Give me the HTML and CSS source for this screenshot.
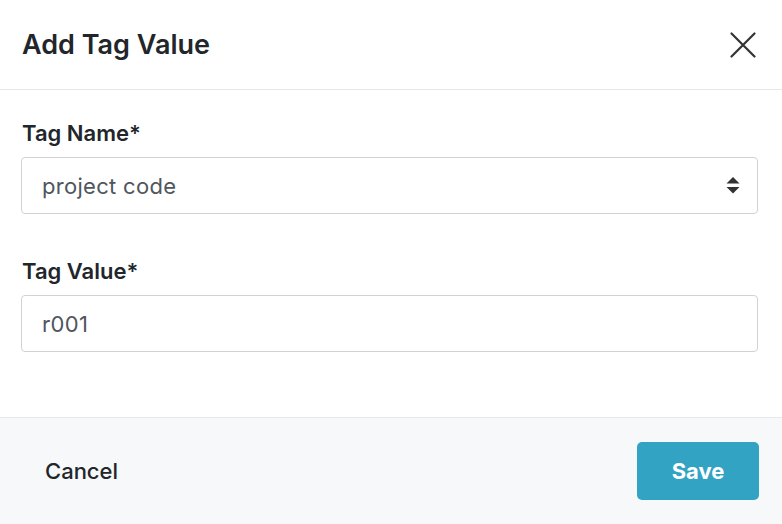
FILE: index.html
```html
<!DOCTYPE html>
<html lang="en">
<head>
    <meta charset="UTF-8">
    <meta name="viewport" content="width=device-width, initial-scale=1.0">
    <title>Add Tag Value</title>
    <link rel="stylesheet" href="styles.css">
</head>
<body>
    <div class="modal">
        <!-- header -->
        <div class="modal-header">
            <h1 class="modal-title">Add Tag Value</h1>
            <button class="close-button" aria-label="Close">
                <svg width="26" height="26" viewBox="0 0 26 26">
                    <path d="M1.5 1.5 L24.5 24.5 M24.5 1.5 L1.5 24.5" stroke="#333" stroke-width="2.2" stroke-linecap="round" fill="none"/>
                </svg>
            </button>
        </div>

        <!-- form -->
        <div class="modal-body">
            <div class="field">
                <label class="field-label" for="tag-name">Tag Name*</label>
                <div class="select-wrap">
                    <select id="tag-name" class="field-control">
                        <option>project code</option>
                    </select>
                    <svg class="select-arrows" width="14" height="17" viewBox="0 0 14 17">
                        <path d="M7 0 L13.5 6.5 L0.5 6.5 Z" fill="#333"/>
                        <path d="M0.5 10 L13.5 10 L7 16.5 Z" fill="#333"/>
                    </svg>
                </div>
            </div>
            <div class="field">
                <label class="field-label" for="tag-value">Tag Value*</label>
                <input id="tag-value" class="field-control" type="text" value="r001">
            </div>
        </div>

        <!-- footer -->
        <div class="modal-footer">
            <button class="cancel-button">Cancel</button>
            <button class="save-button">Save</button>
        </div>
    </div>
</body>
</html>
```

FILE: styles.css
```css
body {
    margin: 0;
    padding: 0;
    font-family: Inter, Lato, Arial, sans-serif;
    background-color: #fff;
    color: #222;
}
.modal {
    width: 782px;
    height: 524px;
    display: flex;
    flex-direction: column;
}
.modal-header {
    height: 89px;
    padding: 0 26px 0 22px;
    display: flex;
    align-items: center;
    justify-content: space-between;
    border-bottom: 1px solid #e6e8eb;
}
.modal-title {
    margin: 0;
    font-size: 27px;
    font-weight: 600;
    color: #22262b;
}
.close-button {
    padding: 0;
    border: none;
    background: none;
    display: flex;
    cursor: pointer;
}
.modal-body {
    padding: 30px 24px 0 21px;
    flex: 1;
    display: flex;
    flex-direction: column;
    gap: 44px;
}
.field {
    display: flex;
    flex-direction: column;
}
.field-label {
    font-size: 22px;
    font-weight: 600;
    line-height: 26px;
    margin-bottom: 11px;
    padding-left: 1px;
    color: #22262b;
}
.select-wrap {
    position: relative;
}
.field-control {
    box-sizing: border-box;
    width: 100%;
    height: 57px;
    padding: 0 20px;
    font-family: Inter, Lato, Arial, sans-serif;
    font-size: 22px;
    letter-spacing: 0.3px;
    color: #50565d;
    background-color: #fff;
    border: 1.5px solid #cfd3d8;
    border-radius: 4px;
    appearance: none;
    -webkit-appearance: none;
    outline: none;
}
.select-arrows {
    position: absolute;
    right: 18px;
    top: 20px;
    pointer-events: none;
}
.modal-footer {
    height: 106px;
    padding: 0 23px 0 45px;
    display: flex;
    align-items: center;
    justify-content: space-between;
    background-color: #f7f8fa;
    border-top: 1px solid #e6e8eb;
}
.cancel-button {
    padding: 0;
    border: none;
    background: none;
    font-family: Inter, Lato, Arial, sans-serif;
    font-size: 22px;
    font-weight: 500;
    color: #22262b;
    cursor: pointer;
}
.save-button {
    width: 122px;
    height: 58px;
    border: none;
    border-radius: 5px;
    background-color: #33a3c3;
    color: #fff;
    font-family: Inter, Lato, Arial, sans-serif;
    font-size: 22px;
    font-weight: 700;
    cursor: pointer;
}
.save-button:hover {
    background-color: #2b8fab;
}
```
